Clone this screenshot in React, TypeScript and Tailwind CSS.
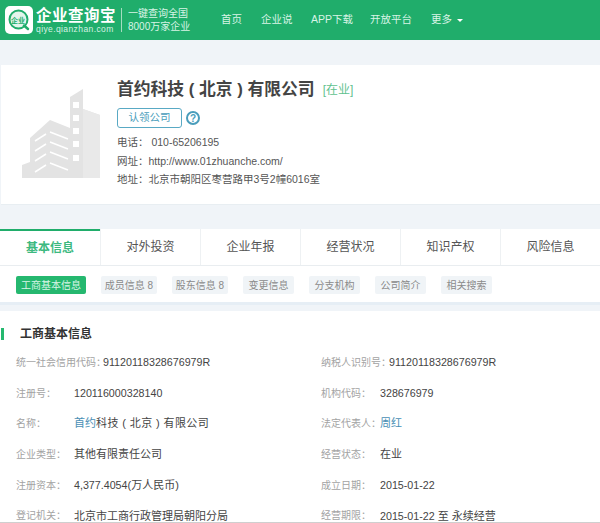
const FONT = "font-['Liberation_Sans','Noto_Sans_CJK_SC',sans-serif]";

const NAV = [
  { label: "首页", w: "w-[40px]" },
  { label: "企业说", w: "w-[50px]" },
  { label: "APP下载", w: "w-[59px]" },
  { label: "开放平台", w: "w-[61px]" },
];

const TABS = ["基本信息", "对外投资", "企业年报", "经营状况", "知识产权", "风险信息"];

const SUB_TABS = [
  { label: "工商基本信息", w: "w-[70px]" },
  { label: "成员信息 8", w: "w-[56px]" },
  { label: "股东信息 8", w: "w-[56px]" },
  { label: "变更信息", w: "w-[51px]" },
  { label: "分支机构", w: "w-[51px]" },
  { label: "公司简介", w: "w-[51px]" },
  { label: "相关搜索", w: "w-[51px]" },
];

function Logo() {
  return (
    <div className="w-[28px] h-[28px] rounded-[5px] bg-white flex items-center justify-center relative shrink-0">
      <svg width="24" height="24" viewBox="0 0 24 24" fill="none" className="absolute left-[2px] top-[2px]">
        <circle cx="11.5" cy="11.5" r="9" fill="#e3f5ec" stroke="#20ad6b" strokeWidth="2" />
        <path d="M17 17.5l4 3.5" stroke="#20ad6b" strokeWidth="2.5" strokeLinecap="round" />
      </svg>
      <span className="relative text-[7px] leading-none font-bold text-[#20ad6b] -translate-x-[1px]">企业</span>
    </div>
  );
}

function Building() {
  return (
    <svg width="78" height="90" viewBox="0 0 78 90" className="shrink-0">
      <path d="M0 89V76L8 73V49L28 31L48 39V8L61 0V20L78 26V89Z" fill="#e3e3e3" />
      <path d="M61 20L78 26V89H61Z" fill="#e9e9e9" />
      <g fill="#ffffff">
        <rect x="51" y="13" width="6" height="6" />
        <rect x="51" y="26" width="6" height="6" />
        <rect x="51" y="39" width="6" height="6" />
        <rect x="51" y="52" width="6" height="6" />
        <rect x="51" y="66" width="6" height="6" />
      </g>
      <g stroke="#ffffff" strokeWidth="1.5" fill="none">
        <path d="M13 52L24 45M28 43L46 50" />
        <path d="M13 62L24 55M28 53L46 60" />
        <path d="M13 72L24 65M28 63L46 70" />
        <path d="M13 83L24 76M28 74L46 81" />
      </g>
    </svg>
  );
}

function Row({ label, children, w = "w-[58px]" }: { label: string; children: React.ReactNode; w?: string }) {
  return (
    <div className="flex items-center h-[30.7px] whitespace-nowrap">
      <span className={`text-[10px] text-[#a3a3a3] shrink-0 ${w}`}>{label}</span>
      <span className="text-[11px] text-[#444]">{children}</span>
    </div>
  );
}

function Num({ children }: { children: React.ReactNode }) {
  return <span className="text-[10.7px]">{children}</span>;
}

export default function App() {
  return (
    <div className={`${FONT} w-[600px] h-[523px] overflow-hidden bg-[#f0f4f8] relative`}>
      {/* Header */}
      <div className="h-[40px] bg-[#20ad6b] flex items-center pl-[5px] text-white">
        <Logo />
        <div className="ml-[3px] w-[79px] shrink-0">
          <div className="text-[15.5px] leading-[18px] font-bold tracking-[0.5px] whitespace-nowrap">企业查询宝</div>
          <div className="text-[8.5px] leading-[9px] tracking-[0.4px] text-[#d5f2e3] whitespace-nowrap">qiye.qianzhan.com</div>
        </div>
        <div className="w-px h-[24px] bg-[#a5dcc0] ml-[6px]" />
        <div className="ml-[6px] w-[62px] text-[10px] leading-[13px] text-[#d8f4e6] whitespace-nowrap">
          <div>一键查询全国</div>
          <div>8000万家企业</div>
        </div>
        <div className="ml-[31px] flex items-center text-[10.5px] text-[#d8f4e6] whitespace-nowrap">
          {NAV.map((n) => (
            <span key={n.label} className={n.w}>
              {n.label}
            </span>
          ))}
          <span className="flex items-center gap-[5px]">
            更多
            <span className="w-0 h-0 border-x-[3px] border-x-transparent border-t-[3px] border-t-white" />
          </span>
        </div>
      </div>

      {/* Company card */}
      <div className="mt-[25px] ml-px h-[140px] bg-white flex pl-[21px] pt-[13px] border-b border-[#e8eef2]">
        <div className="pt-[11px] w-[80px]">
          <Building />
        </div>
        <div className="ml-[15px] whitespace-nowrap">
          <div className="flex items-center h-[24px]">
            <span className="text-[16.8px] font-bold text-[#444]">首约科技 ( 北京 ) 有限公司</span>
            <span className="ml-[8px] text-[12px] text-[#5fc28f]">[在业]</span>
          </div>
          <div className="flex items-center mt-[6px] gap-[4px]">
            <div className="w-[65px] h-[20px] rounded-[3px] border border-[#59a9c4] flex items-center justify-center text-[10.5px] text-[#4a9dbb]">
              认领公司
            </div>
            <div className="w-[14px] h-[14px] rounded-full border-2 border-[#4a9dbb] flex items-center justify-center text-[10px] font-bold text-[#4a9dbb]">
              ?
            </div>
          </div>
          <div className="mt-[5px] text-[10.5px] leading-[18.5px] text-[#555]">
            <div>电话： 010-65206195</div>
            <div>网址：http://www.01zhuanche.com/</div>
            <div>地址：北京市朝阳区枣营路甲3号2幢6016室</div>
          </div>
        </div>
      </div>

      {/* Tabs */}
      <div className="mt-[24px] h-[37px] bg-white grid grid-cols-6 border-b border-[#e9edf0]">
        {TABS.map((t, i) => (
          <div
            key={t}
            className={`flex items-center justify-center text-[12px] ${
              i === 0
                ? "border-t-2 border-[#20ad6b] text-[#3db97f] font-bold"
                : "border-l border-[#eef1f3] text-[#555]"
            }`}
          >
            {t}
          </div>
        ))}
      </div>

      {/* Sub tabs */}
      <div className="h-[39px] bg-white flex items-start pt-[10px] gap-[15px] pl-[16px] border-b-[3px] border-[#e6eef5]">
        {SUB_TABS.map((s, i) => (
          <div
            key={s.label}
            className={`${s.w} h-[18px] flex items-center justify-center text-[10px] rounded-[2px] whitespace-nowrap ${
              i === 0 ? "bg-[#25b86f] text-[#d9f5e7]" : "bg-[#f0f4f7] text-[#8a8a8a]"
            }`}
          >
            {s.label}
          </div>
        ))}
      </div>

      {/* Basic info */}
      <div className="mt-[6px] h-[212px] bg-white border-b border-[#cfcfcf]">
        <div className="h-[36px] flex items-center pt-[10px]">
          <div className="w-[3px] h-[12px] ml-px bg-[#25b86f]" />
          <span className="ml-[16px] text-[12px] font-bold text-[#333]">工商基本信息</span>
        </div>
        <div className="grid grid-cols-2">
          <div className="pl-[16px]">
            <Row label="统一社会信用代码：" w="w-[87px]"><Num>91120118328676979R</Num></Row>
            <Row label="注册号："><Num>120116000328140</Num></Row>
            <Row label="名称：">
              <span className="text-[#4a8fb5]">首约</span>
              <span className="tracking-[0.4px]">科技 ( 北京 ) 有限公司</span>
            </Row>
            <Row label="企业类型：">其他有限责任公司</Row>
            <Row label="注册资本："><Num>4,377.4054</Num>(万人民币)</Row>
            <Row label="登记机关：">北京市工商行政管理局朝阳分局</Row>
          </div>
          <div className="pl-[21px]">
            <Row label="纳税人识别号：" w="w-[68px]"><Num>91120118328676979R</Num></Row>
            <Row label="机构代码：" w="w-[59px]"><Num>328676979</Num></Row>
            <Row label="法定代表人：" w="w-[59px]">
              <span className="text-[#4a8fb5]">周红</span>
            </Row>
            <Row label="经营状态：" w="w-[59px]">在业</Row>
            <Row label="成立日期：" w="w-[59px]"><Num>2015-01-22</Num></Row>
            <Row label="经营期限：" w="w-[59px]"><Num>2015-01-22</Num> 至 永续经营</Row>
          </div>
        </div>
      </div>
    </div>
  );
}
